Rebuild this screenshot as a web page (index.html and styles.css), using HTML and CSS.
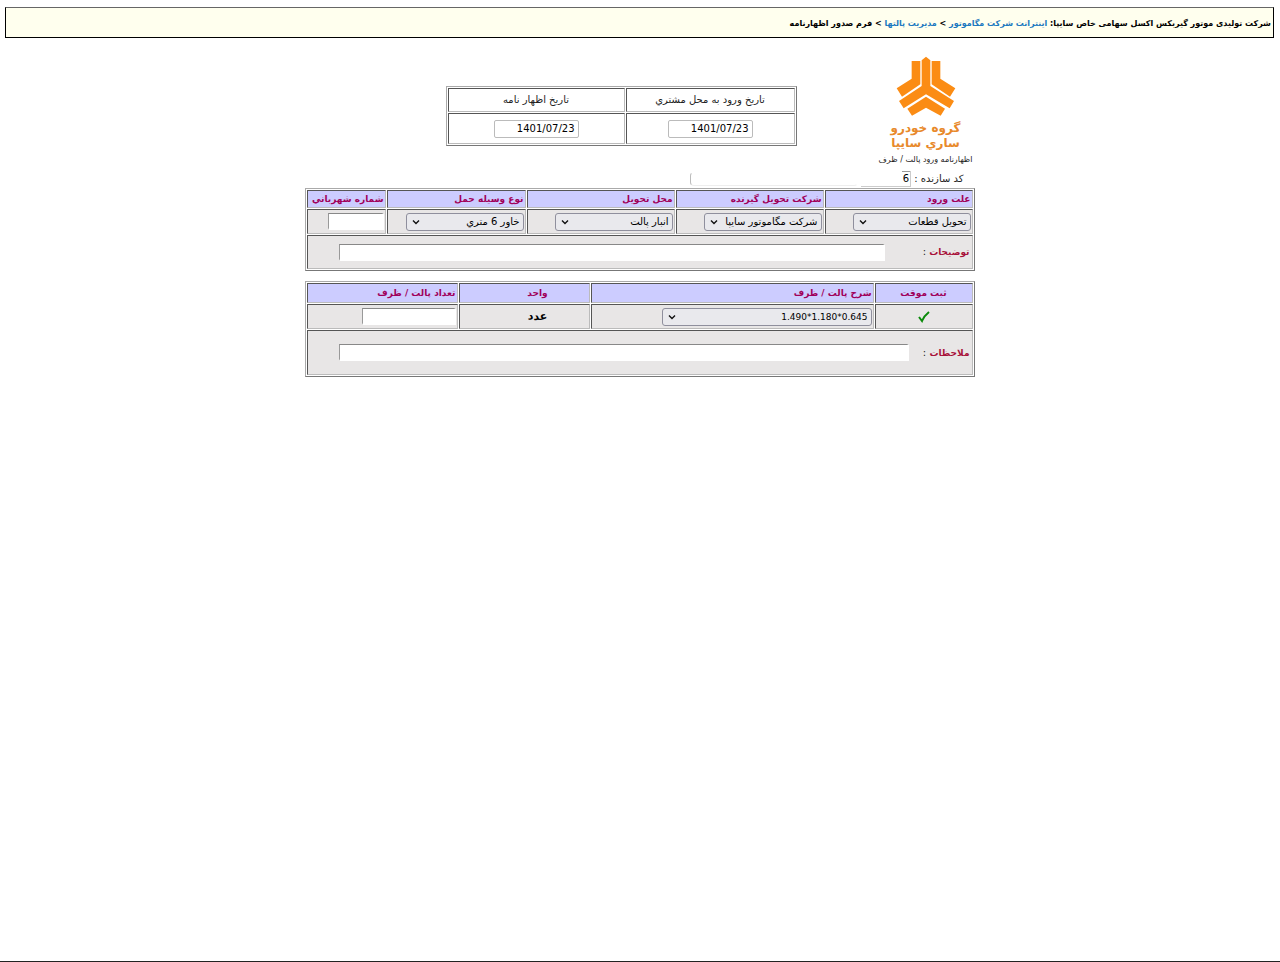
FILE: index.html
```html
<!DOCTYPE html>
<html lang="fa" dir="rtl">
<head>
	<meta charset="utf-8">
	<title>فرم صدور اظهارنامه</title>
	<link rel="stylesheet" href="styles.css">
</head>
<body>
	<nav class="breadcrumb">
		شرکت تولیدی موتور گیربکس اکسل سهامی خاص سایپا:
		<a href="#">اینترانت شرکت مگاموتور</a> &gt;
		<a href="#">مدیریت پالتها</a> &gt;
		فرم صدور اظهارنامه
	</nav>

	<form class="form">
		<header class="form__head">
			<div class="brand">
				<svg class="brand__logo" viewBox="6 9 180 180" aria-hidden="true">
					<g fill="#fb8c14">
						<path d="M53 24 H79 V94 L24 131 L8 106 L53 77 Z"/>
						<path d="M139 24 H113 V94 L168 131 L184 106 L139 77 Z"/>
						<path d="M96 11 L109 22 V99 L180 144 L167 166 L96 124 L29 166 L15 144 L83 99 V22 Z"/>
						<path d="M96 131 L153 167 L140 188 L96 164 L54 188 L40 167 Z"/>
					</g>
				</svg>
				<div class="brand__name">گروه خودرو<br>ساري سايپا</div>
				<div class="brand__title">اظهارنامه ورود پالت / ظرف</div>
			</div>
			<table class="grid dates">
				<colgroup>
					<col class="w-arrival"><col>
				</colgroup>
				<tr>
					<th><label for="arrival">تاريخ ورود به محل مشتري</label></th>
					<th><label for="issued">تاريخ اظهار نامه</label></th>
				</tr>
				<tr>
					<td><input class="date" id="arrival" type="text" value="1401/07/23"></td>
					<td><input class="date" id="issued" type="text" value="1401/07/23"></td>
				</tr>
			</table>
		</header>

		<div class="maker">
			<label for="maker">کد سازنده :</label>
			<input class="maker__code" id="maker" type="text" value="6">
			<input class="maker__name" type="text" aria-label="نام سازنده">
		</div>

		<table class="grid delivery">
			<colgroup>
				<col class="w-wide"><col class="w-wide"><col class="w-wide"><col class="w-vehicle"><col>
			</colgroup>
			<tr>
				<th><label for="reason">علت ورود</label></th>
				<th><label for="company">شرکت تحويل گيرنده</label></th>
				<th><label for="place">محل تحويل</label></th>
				<th><label for="vehicle">نوع وسيله حمل</label></th>
				<th><label for="plate">شماره شهرباني</label></th>
			</tr>
			<tr class="fields">
				<td><select id="reason"><option>تحويل قطعات</option></select></td>
				<td><select id="company"><option>شرکت مگاموتور سايپا</option></select></td>
				<td><select id="place"><option>انبار پالت</option></select></td>
				<td><select id="vehicle"><option>خاور 6 متري</option></select></td>
				<td><input class="text plate" id="plate" type="text"></td>
			</tr>
			<tr>
				<td colspan="5">
					<div class="note note--description">
						<label for="description"><b>توضيحات</b> :</label>
						<input class="text" id="description" type="text">
					</div>
				</td>
			</tr>
		</table>

		<table class="grid pallets">
			<colgroup>
				<col class="w-save"><col class="w-pallet"><col class="w-unit"><col>
			</colgroup>
			<tr>
				<th class="center">ثبت موقت</th>
				<th><label for="pallet">شرح پالت / ظرف</label></th>
				<th class="center unit">واحد</th>
				<th><label for="count">تعداد پالت / ظرف</label></th>
			</tr>
			<tr class="fields">
				<td>
					<button class="save" type="button" aria-label="ثبت موقت">
						<svg viewBox="0 0 12 12"><path d="M1 6 L4 10 Q6 5 11 1" fill="none" stroke="#0a8a0a" stroke-width="2"/></svg>
					</button>
				</td>
				<td><select class="pallet" id="pallet"><option>1.490*1.180*0.645</option></select></td>
				<td class="center unit">عدد</td>
				<td><input class="text count" id="count" type="text"></td>
			</tr>
			<tr>
				<td colspan="4">
					<div class="note note--remarks">
						<label for="remarks"><b>ملاحظات</b> :</label>
						<input class="text" id="remarks" type="text">
					</div>
				</td>
			</tr>
		</table>
	</form>
</body>
</html>
```
FILE: styles.css
```css
* {
	box-sizing: border-box;
}

body {
	min-height: 100vh;
	margin: 0;
	padding: 7px 6px 0 5px;
	border-bottom: 1px solid #222;
	background-color: #fff;
	color: #222;
	font: 10px/14px Tahoma, "DejaVu Sans", sans-serif;
}

input,
select,
button {
	font: inherit;
	color: #000;
}

.breadcrumb {
	padding: 9px 2px 6px;
	border: 1px solid #000;
	border-top-color: #666;
	background-color: #ffffee;
	color: #000;
	font-size: 8px;
	font-weight: bold;
}

.breadcrumb a {
	color: #1b78c0;
	text-decoration: none;
}

.form {
	width: 100%;
	max-width: 670px;
	margin: 18px auto 0;
}

.form__head {
	display: flex;
	align-items: flex-start;
}

.brand {
	display: flex;
	flex: none;
	flex-direction: column;
	align-items: center;
	width: 98px;
}

.brand__logo {
	width: 60px;
	height: 60px;
}

.brand__name {
	margin-top: 5px;
	color: #e8892b;
	font-size: 12px;
	line-height: 15px;
	font-weight: bold;
	text-align: center;
	white-space: nowrap;
}

.brand__title {
	font-size: 8px;
	line-height: 18px;
	white-space: nowrap;
}

.grid {
	border: 1px solid #777;
	border-top-color: #aaa;
	border-left-color: #aaa;
	border-spacing: 1px;
	table-layout: fixed;
}

.grid th,
.grid td {
	padding: 1px;
	border: 1px solid;
	border-color: #555 #bbb #bbb #555;
	text-align: start;
}

.grid .center {
	text-align: center;
}

.dates {
	width: 351px;
	height: 60px;
	margin: 30px 80px 0 0;
}

.dates th,
.dates td {
	font-weight: normal;
	text-align: center;
}

.dates th {
	height: 24px;
}

.w-arrival {
	width: 169px;
}

.date {
	width: 85px;
	height: 18px;
	padding: 0 3px;
	border: 1px solid #bbb;
	border-radius: 2px;
}

.maker {
	display: flex;
	gap: 3px;
	align-items: center;
	height: 19px;
	padding-inline-start: 11px;
}

.maker__code {
	width: 50px;
	height: 16px;
	padding: 0 1px;
	border: 0 solid #ccc;
	border-width: 0 1px 1px 0;
	background: linear-gradient(#999, #999) no-repeat right top / 8px 1px;
}

.maker__name {
	width: 168px;
	height: 14px;
	border: 1px solid #fff;
	border-left-color: #bbb;
	border-bottom-color: #eee;
	border-radius: 4px;
}

.delivery,
.pallets {
	width: 100%;
}

.delivery th,
.pallets th {
	background-color: #ccf;
	color: #a0005a;
	font-size: 9px;
	white-space: nowrap;
}

.pallets th {
	height: 20px;
}

.delivery td,
.pallets td {
	background-color: #e8e6e6;
}

.fields td {
	height: 25px;
}

.w-wide {
	width: 148px;
}

.w-vehicle {
	width: 139px;
}

.w-save {
	width: 98px;
}

.w-pallet {
	width: 283px;
}

.w-unit {
	width: 131px;
}

select {
	display: block;
	width: 118px;
	height: 18px;
	padding: 0 3px 0 20px;
	border: 1px solid #8f8f9d;
	border-radius: 3px;
	background: #e9e9ed url("data:image/svg+xml,%3Csvg xmlns='http://www.w3.org/2000/svg' viewBox='0 0 8 8'%3E%3Cpath d='M1 2.5l3 3 3-3' fill='none' stroke='%23111' stroke-width='1.4'/%3E%3C/svg%3E") no-repeat 5px center / 8px 8px;
	appearance: none;
}

.text {
	display: block;
	height: 17px;
	border: 2px solid #fff;
	border-top: 1px solid #888;
	border-left: 1px solid #999;
	background-color: #fff;
}

.plate {
	width: 56px;
}

.pallets {
	margin-top: 10px;
}

.pallets .unit {
	padding-left: 28px;
}

.pallets td.unit {
	color: #000;
	font-size: 11px;
	font-weight: bold;
}

.pallet {
	width: 210px;
	direction: ltr;
	font-size: 9px;
	text-align: right;
	text-align-last: right;
}

.count {
	width: 94px;
}

.save {
	display: block;
	margin: 0 auto;
	padding: 0;
	border: 0;
	background: none;
	cursor: pointer;
}

.save svg {
	display: block;
	width: 12px;
	height: 12px;
}

.note {
	display: flex;
	align-items: center;
	padding: 0 1px 0 30px;
}

.note label {
	flex: none;
}

.note b {
	color: #a8123a;
	font-size: 9px;
}

.note .text {
	flex: 1;
}

.note--description {
	gap: 38px;
	height: 30px;
}

.note--remarks {
	gap: 14px;
	height: 41px;
}
```
